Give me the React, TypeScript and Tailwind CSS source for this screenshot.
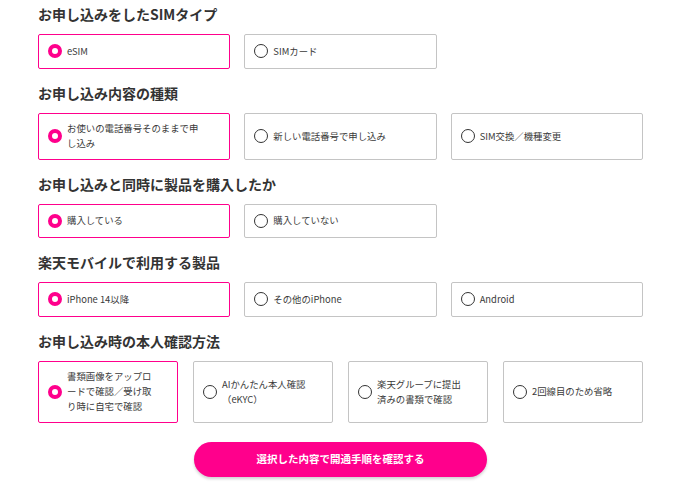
import React from "react";

type Opt = { label: React.ReactNode; checked?: boolean };

function Radio({ checked }: { checked?: boolean }) {
  return checked ? (
    <span className="shrink-0 w-[14px] h-[14px] rounded-full border-[4.5px] border-[#ff008c] bg-white" />
  ) : (
    <span className="shrink-0 w-[14px] h-[14px] rounded-full border-[1.5px] border-[#333333] bg-white" />
  );
}

function Box({ label, checked }: Opt) {
  return (
    <div
      className={
        checked
          ? "flex items-center gap-[5px] min-h-[34.5px] py-[7.5px] pl-[9px] pr-[16px] border border-[#ff008c] rounded-[2px] bg-white"
          : "flex items-center gap-[5px] min-h-[34.5px] py-[7.5px] pl-[9px] pr-[16px] border border-[#c4c4c4] rounded-[2px] bg-white"
      }
    >
      <Radio checked={checked} />
      <span className="text-[9.4px] leading-[15px] text-[#3a3a3a] whitespace-nowrap">{label}</span>
    </div>
  );
}

function Heading({ children, first }: { children: React.ReactNode; first?: boolean }) {
  return (
    <h2
      className={
        first
          ? "text-[14px] leading-[21px] font-bold text-[#333333] mb-[9px]"
          : "text-[14px] leading-[21px] font-bold text-[#333333] mt-[14px] mb-[9px]"
      }
    >
      {children}
    </h2>
  );
}

export default function App() {
  return (
    <div className="bg-white w-[686px] h-[490px] pl-[38px] pt-[4px] font-['Noto_Sans_CJK_JP','Noto_Sans',sans-serif]">
      <div className="w-[605px]">
        <Heading first>お申し込みをしたSIMタイプ</Heading>
        <div className="grid grid-cols-3 gap-x-[14px]">
          <Box label="eSIM" checked />
          <Box label="SIMカード" />
        </div>

        <Heading>お申し込み内容の種類</Heading>
        <div className="grid grid-cols-3 gap-x-[14px]">
          <Box
            checked
            label={
              <>
                お使いの電話番号そのままで申
                <br />
                し込み
              </>
            }
          />
          <Box label="新しい電話番号で申し込み" />
          <Box label="SIM交換／機種変更" />
        </div>

        <Heading>お申し込みと同時に製品を購入したか</Heading>
        <div className="grid grid-cols-3 gap-x-[14px]">
          <Box label="購入している" checked />
          <Box label="購入していない" />
        </div>

        <Heading>楽天モバイルで利用する製品</Heading>
        <div className="grid grid-cols-3 gap-x-[14px]">
          <Box label="iPhone 14以降" checked />
          <Box label="その他のiPhone" />
          <Box label="Android" />
        </div>

        <Heading>お申し込み時の本人確認方法</Heading>
        <div className="grid grid-cols-4 gap-x-[15px]">
          <Box
            checked
            label={
              <>
                書類画像をアップロ
                <br />
                ードで確認／受け取
                <br />
                り時に自宅で確認
              </>
            }
          />
          <Box
            label={
              <>
                AIかんたん本人確認
                <br />
                （eKYC）
              </>
            }
          />
          <Box
            label={
              <>
                楽天グループに提出
                <br />
                済みの書類で確認
              </>
            }
          />
          <Box label="2回線目のため省略" />
        </div>

        <div className="flex justify-center mt-[19px]">
          <button className="w-[293px] h-[35px] rounded-full bg-[#ff008c] text-white text-[10.5px] font-bold shadow-[0_2px_3px_rgba(0,0,0,0.18)]">
            選択した内容で開通手順を確認する
          </button>
        </div>
      </div>
    </div>
  );
}
